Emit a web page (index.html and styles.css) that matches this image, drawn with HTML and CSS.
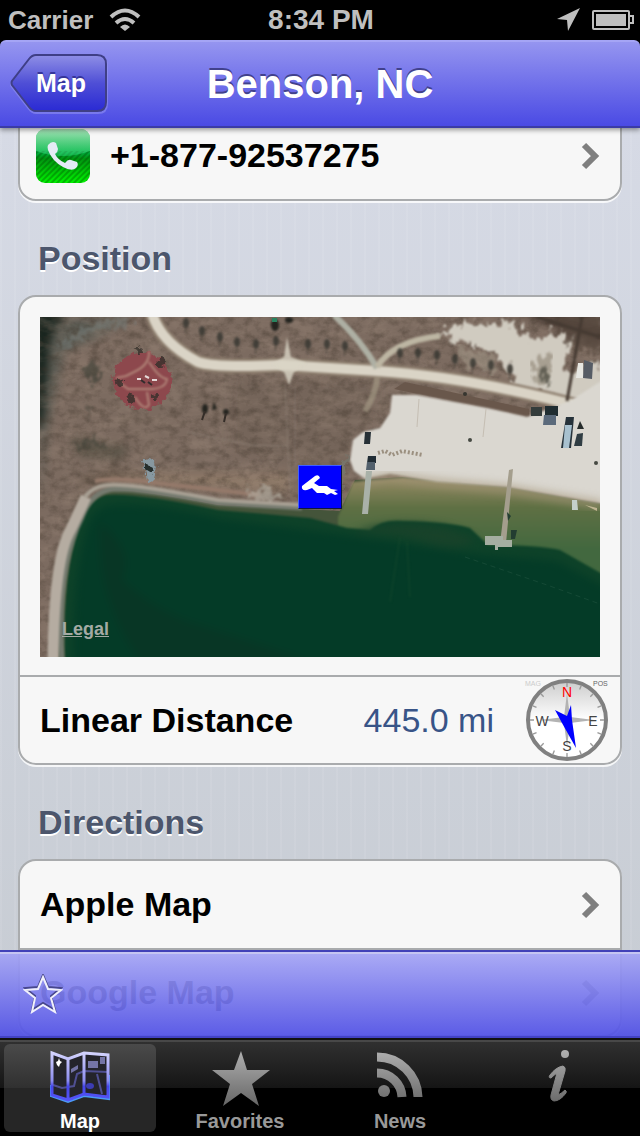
FILE: index.html
```html
<!DOCTYPE html>
<html lang="en">
<head>
<meta charset="utf-8">
<meta name="viewport" content="width=device-width">
<title>Benson, NC</title>
<link rel="stylesheet" href="styles.css">
</head>
<body>
<div class="app">
  <div class="status">
    <div class="status-left">
      <span>Carrier</span>
      <svg width="32" height="24" viewBox="0 0 32 24" aria-hidden="true">
        <g fill="none" stroke="#bfbfbf" stroke-width="4"><path d="M2 9Q16-4 30 9"/><path d="M7 15Q16 7 25 15"/></g>
        <path d="M11 19Q16 14 21 19L16 23Z" fill="#bfbfbf"/>
      </svg>
    </div>
    <span class="time">8:34 PM</span>
    <div class="status-right">
      <svg width="24" height="24" viewBox="0 0 24 24" aria-hidden="true"><path d="M24 0L12 23L11 12L1 11Z" fill="#bfbfbf"/></svg>
      <svg width="42" height="20" viewBox="0 0 42 20" aria-hidden="true">
        <rect x="1" y="1" width="36" height="18" rx="1" fill="none" stroke="#bfbfbf" stroke-width="2"/>
        <rect x="4" y="4" width="30" height="12" fill="#bfbfbf"/>
        <path d="M38 6H41V13H38" fill="none" stroke="#bfbfbf" stroke-width="2"/>
      </svg>
    </div>
  </div>

  <header class="navbar">
    <button class="back" type="button">
      <svg class="back-shape" width="98" height="60" viewBox="0 0 98 60" aria-hidden="true">
        <defs><linearGradient id="backFill" x1="0" y1="0" x2="0" y2="1"><stop offset="0" stop-color="#8f8fe6"/><stop offset=".5" stop-color="#4f4fd6"/><stop offset="1" stop-color="#2a2ad4"/></linearGradient></defs>
        <path d="M26 3H88Q97 3 97 12V50Q97 59 88 59H26Q22 59 19 55L2 33Q0 30 2 28L19 6Q22 3 26 3Z" fill="none" stroke="#9c9cf4" stroke-opacity=".5" stroke-width="2"/>
        <path d="M26 1H87Q96 1 96 10V48Q96 57 87 57H26Q22 57 19 53L2 31Q1 29 2 27L19 5Q22 1 26 1Z" fill="url(#backFill)" stroke="#3f3f86" stroke-width="2"/>
      </svg>
      <span class="back-label">Map</span>
    </button>
    <h1>Benson, NC</h1>
  </header>

  <div class="stage">
    <main class="content">
      <div class="card">
        <a class="row" href="#call">
          <svg class="phone" width="54" height="54" viewBox="0 0 54 54" aria-hidden="true">
            <defs>
              <linearGradient id="green" x1="0" y1="0" x2="0" y2="1"><stop offset="0" stop-color="#22b44c"/><stop offset=".45" stop-color="#00a838"/><stop offset=".55" stop-color="#009410"/><stop offset="1" stop-color="#00f400"/></linearGradient>
              <linearGradient id="gloss" x1="0" y1="0" x2="0" y2="1"><stop offset="0" stop-color="#fff" stop-opacity=".6"/><stop offset="1" stop-color="#30e080" stop-opacity=".4"/></linearGradient>
              <pattern id="hatch" width="4" height="4" patternUnits="userSpaceOnUse" patternTransform="rotate(45)"><rect width="2" height="4" fill="#003c00" fill-opacity=".3"/></pattern>
              <clipPath id="tile"><rect width="54" height="54" rx="9"/></clipPath>
            </defs>
            <g clip-path="url(#tile)">
              <rect width="54" height="54" fill="url(#green)"/>
              <rect y="22" width="54" height="32" fill="url(#hatch)"/>
              <path d="M0 0H54V22Q27 32 0 22Z" fill="url(#gloss)"/>
            </g>
            <path d="M12 16Q16 11 20 14L22 20Q22 23 19 25Q22 31 29 34Q32 30 35 31L41 33Q43 36 40 39Q36 43 27 38Q16 32 12 21Q11 18 12 16Z" fill="#e4ebf5"/>
          </svg>
          <span class="row-title">+1-877-92537275</span>
          <svg class="chevron" width="20" height="28" viewBox="0 0 20 28" aria-hidden="true"><path d="M4 3L15 14L4 25" fill="none" stroke="#7f7f7f" stroke-width="6"/></svg>
        </a>
      </div>

      <h2>Position</h2>
      <div class="card">
        <div class="map">
          <svg class="map-art" viewBox="0 0 560 340" preserveAspectRatio="xMidYMid slice" role="img" aria-label="Satellite view of the lake" color-interpolation-filters="sRGB">
            <defs>
              <linearGradient id="shallow" x1="0" y1="0" x2="0" y2="1"><stop offset="0" stop-color="#958a64"/><stop offset=".25" stop-color="#5f7044"/><stop offset=".6" stop-color="#42683f"/></linearGradient>
              <filter id="soft"><feGaussianBlur stdDeviation="1"/></filter>
              <filter id="softer" x="-20%" y="-20%" width="140%" height="140%"><feGaussianBlur stdDeviation="4"/></filter>
              <filter id="rough" x="-5%" y="-5%" width="110%" height="110%"><feTurbulence type="fractalNoise" baseFrequency=".15" numOctaves="3" seed="4"/><feDisplacementMap in="SourceGraphic" scale="10" xChannelSelector="R" yChannelSelector="G"/><feGaussianBlur stdDeviation=".7"/></filter>
              <filter id="ragged" x="-10%" y="-10%" width="120%" height="120%"><feTurbulence type="fractalNoise" baseFrequency=".16 .09" numOctaves="4" seed="9"/><feDisplacementMap in="SourceGraphic" scale="26" xChannelSelector="R" yChannelSelector="G"/><feGaussianBlur stdDeviation="1"/></filter>
              <filter id="grain" x="0" y="0" width="100%" height="100%"><feTurbulence type="fractalNoise" baseFrequency=".1 .13" numOctaves="4" seed="7"/><feColorMatrix values="0 0 0 0 .25  0 0 0 0 .21  0 0 0 0 .17  0 2 0 0 -.8"/></filter>
              <filter id="dust" x="0" y="0" width="100%" height="100%"><feTurbulence type="fractalNoise" baseFrequency=".04 .09" numOctaves="4" seed="12"/><feColorMatrix values="0 0 0 0 .66  0 0 0 0 .58  0 0 0 0 .52  2 0 0 0 -.8"/></filter>
              <g id="tree"><ellipse rx="3" ry="5" fill="#35352f" fill-opacity=".8"/><path d="M0 3L-1 10" stroke="#4b443c" stroke-width="1"/></g>
            </defs>
            <rect width="560" height="340" fill="#7c6b60"/>
            <g filter="url(#softer)">
              <path d="M0 0H90L60 20L25 35L8 110L0 190Z" fill="#5c5b53"/>
              <path d="M-6-6H24L10 25L4 100L-6 120Z" fill="#18241e"/>
              <path d="M30 120L90 130L80 143L40 139Z" fill="#5c5549"/>
              <path d="M60 155H250V176L60 164Z" fill="#8b7766"/>
              <path d="M40 168Q52 154 90 157" fill="none" stroke="#57493c" stroke-width="5"/>
              <path d="M480-6H566V28L520 18Z" fill="#4e4038"/>
              <path d="M190 60L340 64L340 95L300 150L190 135Z" fill="#75655a"/>
            </g>
            <rect width="560" height="340" filter="url(#grain)" opacity=".45"/>
            <rect width="560" height="340" filter="url(#dust)" opacity=".3"/>
            <path d="M20 30L56 10L90 3" fill="none" stroke="#77807f" stroke-width="9" stroke-opacity=".45" filter="url(#ragged)"/>

            <path d="M397 16L412 10L430 5L445 8L463 4L480 12L493 23L514 12L530 22L525 60L545 50L564 42V92H530L521 82L488 74L471 66L468 50L455 39L437 28L412 24Z" fill="#d0cbc0" filter="url(#ragged)"/>
            <path d="M492 50Q494 34 506 38Q514 50 509 64L498 72Z" fill="#8c8272" fill-opacity=".6" filter="url(#ragged)"/>
            <path d="M418 30L450 40L462 56L420 48Z" fill="#a89e8e" fill-opacity=".5" filter="url(#ragged)"/>
            <path d="M515 0H560V36L528 26Z" fill="#57493e" fill-opacity=".7" filter="url(#ragged)"/>
            <path d="M354 72L489 100V92L365 65Z" fill="#69574b"/>
            <g fill="none" filter="url(#soft)">
              <path d="M112-4Q120 25 158 45Q174 51 243 48L337 54Q430 60 545 91" stroke="#8d7e6e" stroke-width="15"/>
              <path d="M112-4Q120 25 158 45Q174 51 243 48L337 54Q430 60 545 91" stroke="#dad4c6" stroke-width="10"/>
              <path d="M294-2Q321 23 337 51" stroke="#aeb0a4" stroke-width="6"/><path d="M337 50Q353 24 400 19" stroke="#bdb6a3" stroke-width="6"/>
              <path d="M337 60Q337 75 325 94" stroke="#a39783" stroke-width="6" stroke-opacity=".7"/>
              <path d="M245 68L250 175M255 70V150" stroke="#94877b" stroke-width="1" stroke-opacity=".6"/>
              <path d="M147 115L210 128L248 129" stroke="#918579" stroke-width="1" stroke-opacity=".7"/>
            </g>
            <path d="M247 20L251 40L266 46L254 55L249 68L244 55L232 47L244 40Z" fill="#dad4c6" fill-opacity=".8" filter="url(#soft)"/>

            <path d="M18 340Q19 245 42 200Q51 174 76 173Q105 174 178 188L300 194L315 163L363 160L467 170L560 186V340Z" fill="#44543a"/>
            <path d="M298 200L313 165L363 161L467 170L562 187V280H298Z" fill="url(#shallow)" filter="url(#soft)"/>
            <path d="M25 344Q22 262 38 212Q48 180 68 178Q98 176 178 193L270 201L307 211L330 213Q342 202 363 204Q410 205 430 211L448 228Q500 228 520 233L564 258V344Z" fill="#0e4229" filter="url(#soft)"/>
            <g filter="url(#softer)">
              <path d="M34 344Q32 262 46 214Q52 190 72 188Q120 186 180 202L290 216L350 224L440 238L516 244L570 272V348H34Z" fill="#043b27"/>
              <path d="M312 218Q345 200 405 210L436 222Q420 235 390 227Q355 214 312 218Z" fill="#18422a"/>
              <path d="M60 205Q95 235 82 262Q110 290 150 305L270 344H100Q55 280 60 205Z" fill="#0b3124" fill-opacity=".5"/>
            </g>
            <path d="M360 220L350 285M367 225L370 280" stroke="#1e5032" stroke-width="2" stroke-opacity=".3" filter="url(#soft)"/>
            <g fill="none" filter="url(#soft)">
              <path d="M22 344Q17 248 42 200Q52 173 76 172Q105 172 178 186L262 191" stroke="#747a6f" stroke-width="5"/>
              <path d="M13 344Q14 240 31 212L46 180" stroke="#b5aca1" stroke-width="11"/>
              <path d="M45 180Q55 166 80 168Q105 169 178 183L262 188" stroke="#a8a094" stroke-width="4"/>
              <path d="M55 164Q74 160 108 165L220 178" stroke="#94796a" stroke-width="4"/>
            </g>
            <path d="M208 176L222 168L236 174L243 184L211 181Z" fill="#b6b0a5" fill-opacity=".6" filter="url(#ragged)"/>

            <path d="M352 78H377L447 91L487 100L530 84L564 62V187L467 170L397 165L350 157L325 162L314 154L310 143L313 123L323 115L340 111L350 96Z" fill="#dad7d0" filter="url(#soft)"/>
            <path d="M325 164L350 160L397 166L467 172L562 188" fill="none" stroke="#a5977a" stroke-width="8" stroke-opacity=".7" filter="url(#softer)"/>
            <path d="M379 82L377 110M446 92L443 120" stroke="#c5beb3" stroke-width="1"/>
            <path d="M309 136L303 160L302 186L292 192L292 160Z" fill="#77746a" filter="url(#rough)"/>

            <circle cx="102" cy="64" r="29" fill="#8d484d" filter="url(#rough)"/>
            <g fill="none" stroke="#b08478" stroke-width="2" filter="url(#soft)">
              <path d="M109 34Q110 47 96 54L86 59L76 61"/><path d="M109 45Q119 61 127 62Q126 71 112 72L88 72L80 66"/><path d="M95 80Q104 95 109 88L107 75"/>
            </g>
            <path d="M97 62H101M105 59L109 61M112 63H117" stroke="#e5dad8" stroke-width="2"/><path d="M101 63L105 66M108 65L112 68" stroke="#332c2d" stroke-width="2"/>
            <g fill="#35302b" fill-opacity=".8" filter="url(#rough)"><circle cx="80" cy="66" r="4"/><circle cx="121" cy="46" r="4"/><circle cx="99" cy="34" r="3"/><circle cx="115" cy="80" r="3"/><circle cx="91" cy="82" r="4"/></g>

            <g filter="url(#ragged)" fill="#45443a">
              <ellipse cx="54" cy="57" rx="9" ry="9" fill-opacity=".7"/><ellipse cx="47" cy="95" rx="3" ry="6" fill-opacity=".5"/>
              <ellipse cx="51" cy="127" rx="16" ry="4" fill-opacity=".6"/><ellipse cx="505" cy="59" rx="5" ry="9" fill-opacity=".7"/>
            </g>
            <g fill="#24241f" filter="url(#soft)"><ellipse cx="165" cy="92" rx="3" ry="5"/><circle cx="186" cy="95" r="3"/><path d="M174 85L177 92L172 93Z"/><ellipse cx="235" cy="8" rx="4" ry="6"/><ellipse cx="249" cy="3" rx="4" ry="3"/></g>
            <path d="M165 94L162 103M186 96L184 105" stroke="#342d28" stroke-width="2"/><path d="M232 1H237V5H232Z" fill="#298460"/>
            <g filter="url(#soft)">
              <use href="#tree" x="146" y="6"/><use href="#tree" x="162" y="14"/><use href="#tree" x="180" y="20"/><use href="#tree" x="197" y="25"/><use href="#tree" x="216" y="27"/><use href="#tree" x="236" y="24"/><use href="#tree" x="268" y="27"/><use href="#tree" x="287" y="27"/><use href="#tree" x="305" y="29"/>
              <use href="#tree" x="360" y="36"/><use href="#tree" x="378" y="36"/><use href="#tree" x="397" y="38"/><use href="#tree" x="415" y="42"/><use href="#tree" x="433" y="46"/><use href="#tree" x="451" y="48"/><use href="#tree" x="470" y="52"/>
            </g>
            <path d="M542 0L527 84M497 0L560 20" fill="none" stroke="#453a32" stroke-width="3" filter="url(#soft)"/>
            <path d="M101 145L110 141L118 148L113 162L107 164L105 153Z" fill="#8798a0" filter="url(#rough)"/><path d="M104 147L115 149L111 158L106 155Z" fill="#252e2c" filter="url(#rough)"/>

            <path d="M538 46H543V61H536Z" fill="#e7e7e2"/><path d="M544 43L553 46L552 62L543 61Z" fill="#565c65"/>
            <path d="M491 90H502V99H491Z" fill="#343c3b"/><path d="M505 89H518V99H505Z" fill="#202d31"/><path d="M504 98H516V108H503Z" fill="#5b6a7b"/>
            <path d="M526 100H534L531 131H521Z" fill="#26323a"/><path d="M525 108H532L529 131H523Z" fill="#a8c1cf"/><path d="M537 117L543 116L542 129H534Z" fill="#303d43"/><path d="M540 104L544 112H537Z" fill="#262c2b"/>
            <path d="M325 115H331L330 127H324Z" fill="#263036"/><path d="M328 139H336V146H327Z" fill="#202c34"/><path d="M327 145H335V153H326Z" fill="#52606c"/><path d="M326 154H332L328 197H322Z" fill="#a9b1a8"/>
            <path d="M338 136L345 134L352 138L362 134L383 138" fill="none" stroke="#9b9080" stroke-width="4" stroke-dasharray="2 2"/>
            <path d="M469 153L473 152L466 226H460Z" fill="#a49e8d"/><path d="M445 219H463V223H472V230H458V233H455V228H445Z" fill="#a5aea1"/><path d="M471 213H477L475 222H471ZM467 195L471 199L468 204Z" fill="#233d31"/>
            <circle cx="430" cy="123" r="2" fill="#454942"/><circle cx="425" cy="77" r="2" fill="#373630"/><circle cx="556" cy="146" r="2" fill="#454942"/><path d="M532 183H537L538 193H532Z" fill="#c4cfca"/><path d="M545 188L557 191V194Z" fill="#c0b592"/>
            <path d="M425 240L507 268L560 287" fill="none" stroke="#3c6b55" stroke-width="1" stroke-dasharray="5 4" stroke-opacity=".3"/>
          </svg>
          <svg class="pin" width="44" height="44" viewBox="0 0 44 44" role="img" aria-label="Wakeboard park">
            <rect width="44" height="44" fill="#10183c"/><path d="M0 0H44L42 2V42H2L0 44Z" fill="#4060ff"/><rect x="1" y="1" width="42" height="42" fill="#00f"/>
            <path d="M4 21L17 11Q21 9 22 13L16 18L21 21L29 21L33 24L40 25L36 26L40 29L37 30L33 28L29 30L26 28L19 28L14 23L9 25Q3 26 4 21Z" fill="#fff"/>
          </svg>
          <a class="legal" href="#legal">Legal</a>
        </div>
        <div class="row distance">
          <span class="row-title">Linear Distance</span>
          <span class="value">445.0 mi</span>
          <svg class="compass" width="86" height="86" viewBox="0 0 86 86" role="img" aria-label="Compass">
            <defs><linearGradient id="dial" x1="0" y1="0" x2="0" y2="1"><stop offset="0" stop-color="#ccc"/><stop offset=".5" stop-color="#fff"/></linearGradient></defs>
            <g font-family="Liberation Sans, Arial, sans-serif" font-size="7"><text x="1" y="9" fill="#ccc">MAG</text><text x="69" y="9" fill="#666">POS</text></g>
            <circle cx="43" cy="43" r="39" fill="url(#dial)" stroke="#808080" stroke-width="4"/>
            <circle cx="43" cy="43" r="35" fill="none" stroke="#999" stroke-width="4" pathLength="320" stroke-dasharray="2 18" stroke-dashoffset="1"/>
            <path d="M43 16L46 40L70 43L46 46L43 70L40 46L16 43L40 40Z" fill="#b3b3b3"/>
            <g font-family="Liberation Sans, Arial, sans-serif" font-size="14" text-anchor="middle" fill="#444"><text x="43" y="20" fill="#f00">N</text><text x="43" y="74">S</text><text x="18" y="49">W</text><text x="69" y="49">E</text></g>
            <path d="M31 33L43 39L47 28L48 43L52 71L38 46Z" fill="#00f"/>
          </svg>
        </div>
      </div>

      <h2>Directions</h2>
      <div class="card">
        <a class="row" href="#apple"><span class="row-title">Apple Map</span><svg class="chevron" width="20" height="28" viewBox="0 0 20 28" aria-hidden="true"><path d="M4 3L15 14L4 25" fill="none" stroke="#7f7f7f" stroke-width="6"/></svg></a>
        <a class="row" href="#google"><span class="row-title">Google Map</span><svg class="chevron" width="20" height="28" viewBox="0 0 20 28" aria-hidden="true"><path d="M4 3L15 14L4 25" fill="none" stroke="#7f7f7f" stroke-width="6"/></svg></a>
      </div>
    </main>

    <div class="toolbar">
      <button class="fav" type="button" aria-label="Add to favorites">
        <svg width="40" height="40" viewBox="0 0 40 40" aria-hidden="true">
          <path d="M20 1L25 13L38 14L28 22L32 36L20 29L9 36L12 22L2 14L15 13Z" fill="none" stroke="#47478c" stroke-width="2"/>
          <path d="M20 3L25 15L38 16L28 24L32 38L20 31L9 38L12 24L2 16L15 15Z" fill="none" stroke="#f0f0fb" stroke-width="2"/>
        </svg>
      </button>
    </div>
  </div>

  <nav class="tabs">
    <a class="tab selected" href="#map" aria-current="page">
      <svg width="64" height="56" viewBox="0 0 64 56" aria-hidden="true">
        <defs><linearGradient id="mapInk" x1="0" y1="0" x2="0" y2="56" gradientUnits="userSpaceOnUse"><stop offset="0" stop-color="#dadaff"/><stop offset=".55" stop-color="#8d8df0"/><stop offset=".65" stop-color="#4646e8"/><stop offset="1" stop-color="#5b5bff"/></linearGradient></defs>
        <path d="M4 4L20 10L36 4L60 6V48L36 45L20 52L4 46Z" fill="#24242b"/>
        <path d="M5 35L14 38L26 36L29 24L36 21L60 22M49 24L54 44" fill="none" stroke="#4f4f91" stroke-width="2"/>
        <g fill="#7474a5"><path d="M23 19L30 15V19L23 23Z"/><rect x="40" y="11" width="10" height="7"/><rect x="52" y="7" width="5" height="7"/></g>
        <ellipse cx="42" cy="36" rx="4" ry="3" fill="#3c3cb4"/><path d="M11 8L12 11L14 12L12 14L11 17L9 15L8 12L10 11Z" fill="#fff"/>
        <path d="M3 35V46L20 52L36 46L61 49V25" fill="none" stroke="#4b9bf5" stroke-width="2"/>
        <path d="M4 3L20 9L36 3L60 5V47L36 44L20 50L4 45ZM20 9V50M36 3V44" fill="none" stroke="url(#mapInk)" stroke-width="3"/>
      </svg>
      <span>Map</span>
    </a>
    <a class="tab" href="#favorites">
      <svg width="64" height="56" viewBox="0 0 64 56" aria-hidden="true">
        <defs><linearGradient id="ink" x1="0" y1="0" x2="0" y2="56" gradientUnits="userSpaceOnUse"><stop offset="0" stop-color="#b0b0b0"/><stop offset="1" stop-color="#666"/></linearGradient></defs>
        <path d="M33 1L39 20H62L44 34L51 56L33 43L15 56L22 34L4 20H26Z" fill="url(#ink)"/>
      </svg>
      <span>Favorites</span>
    </a>
    <a class="tab" href="#news">
      <svg width="64" height="56" viewBox="0 0 64 56" aria-hidden="true">
        <g fill="none" stroke="url(#ink)" stroke-width="9"><path d="M9 7A41 41 0 0 1 50 47"/><path d="M9 23A25 25 0 0 1 34 47"/></g><circle cx="16" cy="41" r="6" fill="url(#ink)"/>
      </svg>
      <span>News</span>
    </a>
    <a class="tab" href="#info" aria-label="Information">
      <svg width="64" height="56" viewBox="0 0 64 56" aria-hidden="true">
        <circle cx="37" cy="4" r="4" fill="url(#ink)"/>
        <path d="M22 25Q28 17 35 16Q38 17 37 21L30 45Q34 43 37 40Q39 41 38 43Q32 51 26 51Q22 50 23 45L29 23Q26 25 23 28Q20 28 22 25Z" fill="url(#ink)" stroke="url(#ink)" stroke-width="1"/>
      </svg>
    </a>
  </nav>
</div>
</body>
</html>
```
FILE: styles.css
```css
* { box-sizing: border-box; }
body { margin: 0; background: #000; font-family: "Liberation Sans", Helvetica, Arial, sans-serif; }
a { color: inherit; text-decoration: none; }
button { border: 0; padding: 0; background: none; font: inherit; }
svg { display: block; flex: none; }

.app { display: flex; flex-direction: column; height: 100vh; }

.status {
  display: grid;
  grid-template-columns: 1fr auto 1fr;
  align-items: center;
  height: 40px;
  padding: 0 6px 0 8px;
  color: #bfbfbf;
  font-size: 26px;
  font-weight: bold;
}
.status-left, .status-right { display: flex; align-items: center; gap: 16px; }
.status-right { justify-content: flex-end; gap: 12px; }
.time { font-size: 28px; }

.navbar {
  display: grid;
  grid-template-columns: 1fr auto 1fr;
  align-items: center;
  position: relative;
  z-index: 1;
  height: 88px;
  padding: 0 10px;
  border-top: 2px solid #a5a5f5;
  border-bottom: 2px solid #3b3ba6;
  border-radius: 6px 6px 0 0;
  background: linear-gradient(#9595f0, #4a4ae4);
  box-shadow: 0 2px 5px rgba(0, 0, 0, .4);
  color: #fff;
}
.navbar h1 { margin: 0; font-size: 40px; line-height: 48px; text-shadow: 0 -2px 0 #41418c; }
.back { display: grid; justify-self: start; align-items: center; color: #fff; }
.back-shape, .back-label { grid-area: 1 / 1; }
.back-label { padding: 0 0 2px 4px; font-size: 25px; font-weight: bold; text-shadow: 0 -2px 0 #35359a; }

.stage {
  display: grid;
  grid-template-rows: 100%;
  flex: 1;
  min-height: 0;
  overflow: hidden;
  background:
    repeating-linear-gradient(90deg, rgba(255, 255, 255, .07) 0 2px, transparent 2px 14px),
    linear-gradient(#d6dae5, #c7ccd3);
}
.content, .toolbar { grid-area: 1 / 1; min-width: 0; }
.content { margin-top: -18px; padding: 0 18px; }
.content h2 {
  margin: 0;
  padding: 37px 20px 17px;
  color: #4c566c;
  font-size: 34px;
  line-height: 40px;
  text-shadow: 0 2px 0 #fff;
}
.card {
  border: 2px solid #a9abad;
  border-radius: 18px;
  background: #f7f7f7;
  box-shadow: 0 2px 0 rgba(255, 255, 255, .8);
}
.row {
  display: flex;
  align-items: center;
  height: 87px;
  padding: 0 20px;
  color: #000;
}
.row + .row, .distance { border-top: 2px solid #a9abad; }
.row-title { flex: 1; font-size: 34px; font-weight: bold; }
.phone { margin: 0 20px 0 -4px; }
.value { color: #385487; font-size: 34px; }
.distance { height: 88px; padding-right: 10px; }
.compass { margin-left: 30px; }

.map { display: grid; padding: 20px 20px 18px; }
.map-art, .pin, .legal { grid-area: 1 / 1; }
.map-art { width: 100%; height: 340px; }
.pin { place-self: center; }
.legal {
  place-self: end start;
  padding: 0 0 18px 22px;
  color: #a3aaa4;
  font-size: 18px;
  font-weight: bold;
  line-height: 20px;
  text-decoration: underline;
}

.toolbar {
  display: flex;
  align-items: center;
  align-self: end;
  position: relative;
  height: 88px;
  padding: 0 23px;
  border-top: 2px solid #4141b8;
  border-bottom: 2px solid #4343c4;
  background: linear-gradient(rgba(165, 165, 245, .92), rgba(82, 82, 229, .94));
  box-shadow: inset 0 2px 0 #c5c5f2;
}

.tabs {
  display: grid;
  grid-template-columns: repeat(4, 1fr);
  height: 98px;
  padding: 4px 0;
  border-top: 2px solid #111;
  background: linear-gradient(#484848 0 2px, #303030 2px, #151515 48px, #000 48px);
}
.tab {
  display: flex;
  flex-direction: column;
  align-items: center;
  gap: 4px;
  margin: 0 4px;
  padding-top: 6px;
  border-radius: 6px;
  color: #999;
  font-size: 20px;
  font-weight: bold;
  line-height: 22px;
}
.selected { background: linear-gradient(#4a4a4a, #303030 44px, #262626 44px); color: #fff; }
```
